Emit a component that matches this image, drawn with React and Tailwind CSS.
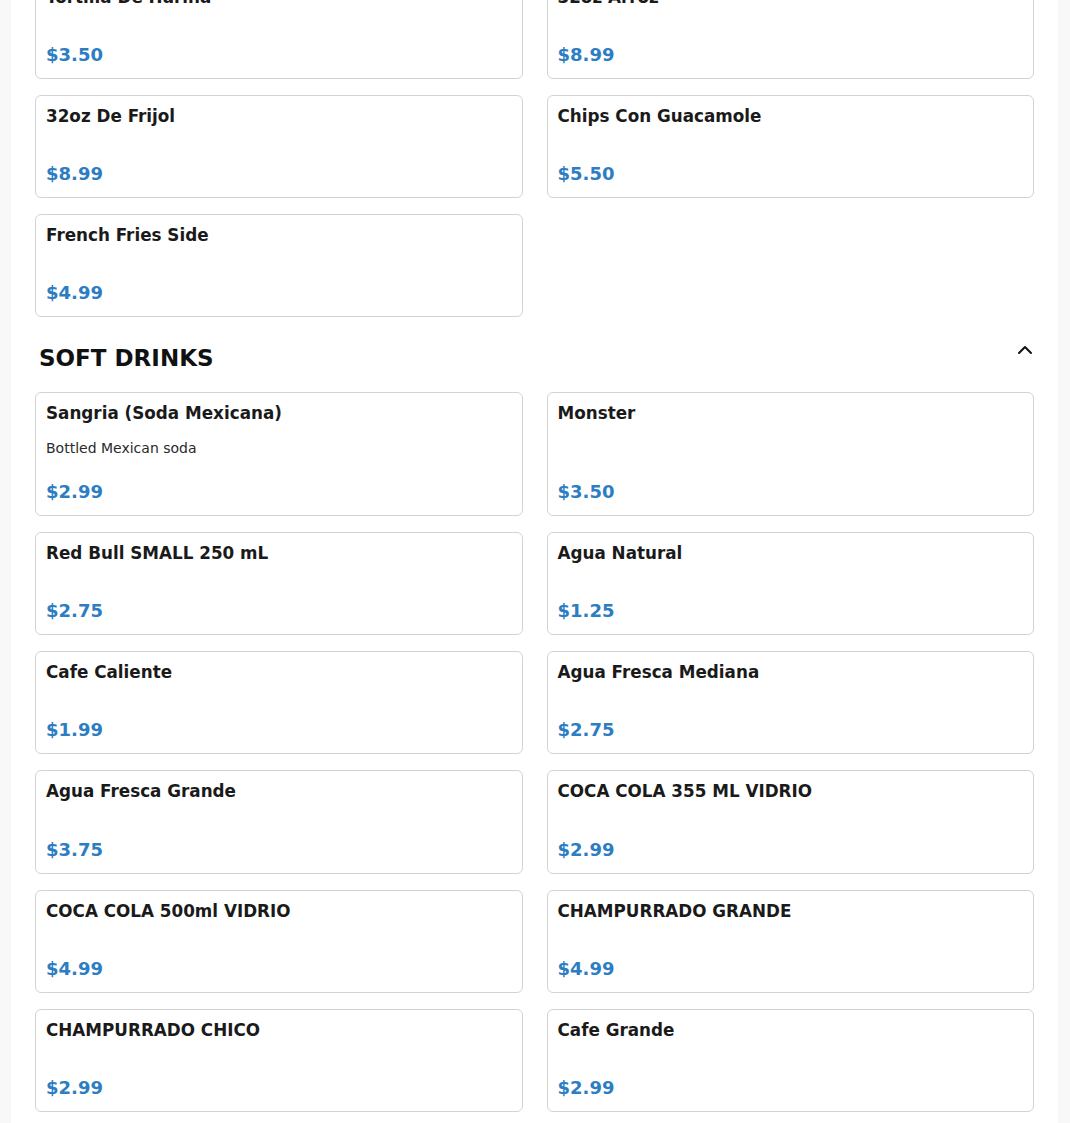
import { ChevronUp } from 'lucide-react';

const SIDES = [
  { name: 'Tortilla De Harina', price: '$3.50' },
  { name: '32oz Arroz', price: '$8.99' },
  { name: '32oz De Frijol', price: '$8.99' },
  { name: 'Chips Con Guacamole', price: '$5.50' },
  { name: 'French Fries Side', price: '$4.99' },
];

const DRINKS = [
  { name: 'Sangria (Soda Mexicana)', desc: 'Bottled Mexican soda', price: '$2.99' },
  { name: 'Monster', price: '$3.50' },
  { name: 'Red Bull SMALL 250 mL', price: '$2.75' },
  { name: 'Agua Natural', price: '$1.25' },
  { name: 'Cafe Caliente', price: '$1.99' },
  { name: 'Agua Fresca Mediana', price: '$2.75' },
  { name: 'Agua Fresca Grande', price: '$3.75' },
  { name: 'COCA COLA 355 ML VIDRIO', price: '$2.99' },
  { name: 'COCA COLA 500ml VIDRIO', price: '$4.99' },
  { name: 'CHAMPURRADO GRANDE', price: '$4.99' },
  { name: 'CHAMPURRADO CHICO', price: '$2.99' },
  { name: 'Cafe Grande', price: '$2.99' },
];

function ItemCard({ name, desc, price }) {
  return (
    <div className="flex flex-col min-h-[103.2px] bg-white border border-[#d3d3d3] rounded-md px-[10px] pt-[10px] pb-[10px]">
      <div className="text-[16.8px] leading-5 font-bold text-[#1a1a1a]">{name}</div>
      {desc && <div className="mt-[15px] mb-[19px] text-sm leading-[21px] text-[#2a2a2a]">{desc}</div>}
      <div className="mt-auto text-lg leading-[27px] font-bold text-[#2d7dc3]">{price}</div>
    </div>
  );
}

export default function App() {
  return (
    <div
      className="min-h-screen bg-[#f8f8f8] overflow-hidden"
      style={{ fontFamily: '"DejaVu Sans", Verdana, sans-serif' }}
    >
      <div className="ml-[11px] mr-[12px] min-h-screen bg-white px-6">
        <div className="-mt-[24.2px] grid grid-cols-2 gap-x-6 gap-y-4">
          {SIDES.map((it) => <ItemCard key={it.name} {...it} />)}
        </div>

        <div className="h-[74.6px] pt-[7.6px] pl-1 flex items-center justify-between">
          <h2 className="text-[23px] leading-8 font-bold text-[#111]">SOFT DRINKS</h2>
          <ChevronUp size={24} strokeWidth={2} className="mb-[16px] -mr-[3px] text-[#111]" />
        </div>

        <div className="grid grid-cols-2 gap-x-6 gap-y-4 pb-10">
          {DRINKS.map((it) => <ItemCard key={it.name} {...it} />)}
        </div>
      </div>
    </div>
  );
}
